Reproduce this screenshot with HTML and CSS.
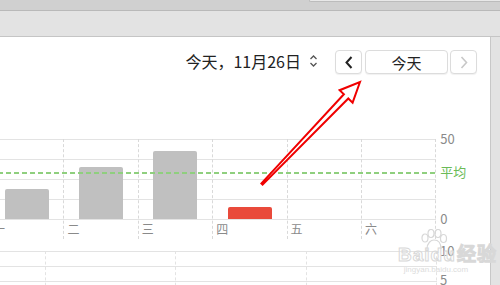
FILE: index.html
```html
<!DOCTYPE html>
<html lang="zh-CN">
<head>
    <meta charset="UTF-8">
    <title>日历 - 今天</title>
    <link rel="stylesheet" href="styles.css">
</head>
<body>
    <div class="titlebar">
        <div class="other-window"></div>
    </div>
    <div class="tabbar"></div>

    <div class="main">
        <div class="content">
            <!-- Date picker and navigation -->
            <div class="toolbar">
                <span class="date-label">今天，11月26日</span>
                <svg class="stepper" width="9" height="14" viewBox="0 0 9 14">
                    <path d="M1.5 5 L4.5 2 L7.5 5 M1.5 9 L4.5 12 L7.5 9" fill="none" stroke="#555" stroke-width="1.3"/>
                </svg>
                <div class="nav">
                    <button class="nav-btn arrow">
                        <svg width="8" height="13" viewBox="0 0 8 13"><path d="M6.5 1 L1.5 6.5 L6.5 12" fill="none" stroke="#222" stroke-width="2"/></svg>
                    </button>
                    <button class="nav-btn today">今天</button>
                    <button class="nav-btn arrow" disabled>
                        <svg width="8" height="13" viewBox="0 0 8 13"><path d="M1.5 1 L6.5 6.5 L1.5 12" fill="none" stroke="#c8c8c8" stroke-width="1.6"/></svg>
                    </button>
                </div>
            </div>

            <!-- Weekly bar chart -->
            <div class="chart">
                <div class="plot">
                    <div class="day"><div class="area"><div class="bar" style="height: 30px"></div></div><span class="day-name">一</span></div>
                    <div class="day"><div class="area"><div class="bar" style="height: 52px"></div></div><span class="day-name">二</span></div>
                    <div class="day"><div class="area"><div class="bar" style="height: 68px"></div></div><span class="day-name">三</span></div>
                    <div class="day"><div class="area"><div class="bar today-bar" style="height: 12px"></div></div><span class="day-name">四</span></div>
                    <div class="day"><div class="area"></div><span class="day-name">五</span></div>
                    <div class="day"><div class="area"></div><span class="day-name">六</span></div>
                    <div class="avg-line"></div>
                </div>
                <div class="axis">
                    <span class="tick top">50</span>
                    <span class="tick avg">平均</span>
                    <span class="tick zero">0</span>
                </div>
            </div>

            <!-- Second chart (cut off) -->
            <div class="chart2">
                <div class="plot2">
                    <div class="col"></div>
                    <div class="col"></div>
                    <div class="col"></div>
                    <div class="col"></div>
                </div>
                <div class="axis2">
                    <span>10</span>
                    <span>5</span>
                </div>
            </div>
        </div>
        <div class="side"></div>
    </div>

    <!-- Annotation arrow -->
    <svg class="annotation" width="500" height="285" viewBox="0 0 500 285">
        <polygon points="360,82 352.6,102.6 348.3,98.5 262.6,184.6 261.4,183.4 343.9,94.3 339.6,90.2"
                 fill="#fff" stroke="#f00000" stroke-width="2" stroke-linejoin="miter"/>
    </svg>

    <!-- Watermark -->
    <div class="watermark">
        <svg class="paw" width="30" height="22" viewBox="0 0 30 22">
            <g fill="none" stroke="#d8d8d8" stroke-width="1.2">
                <ellipse cx="7" cy="9" rx="3" ry="4"/>
                <ellipse cx="13" cy="4.5" rx="3" ry="4"/>
                <ellipse cx="20" cy="4.5" rx="3" ry="4"/>
                <ellipse cx="25.5" cy="9.5" rx="3" ry="4"/>
                <path d="M9 20 C9 14 13 11 16 11 C20 11 23 14 23 20"/>
            </g>
        </svg>
        <div class="wm-title">Bai<span class="wm-du">du</span>经验</div>
        <div class="wm-url">jingyan.baidu.com</div>
    </div>
</body>
</html>
```

FILE: styles.css
```css
/* Page base */
body {
    margin: 0;
    width: 500px;
    height: 285px;
    overflow: hidden;
    background: #fff;
    font-family: "Noto Sans CJK SC", "Noto Sans", sans-serif;
    position: relative;
}

/* Window chrome at the top */
.titlebar {
    height: 10px;
    background: #d0d0d0;
    border-bottom: 1px solid #b9b9b9;
    display: flex;
    justify-content: flex-end;
    align-items: flex-start;
}

.other-window {
    width: 190px;
    height: 1px;
    background: #e8e8e8;
    border-bottom: 1px solid #bcbcbc;
    border-left: 1px solid #bcbcbc;
    border-bottom-left-radius: 3px;
}

.tabbar {
    height: 25px;
    background: #e3e3e3;
    border-bottom: 1px solid #c5c5c5;
}

.main {
    display: flex;
    height: 248px;
}

.content {
    flex: 1;
    overflow: hidden;
}

.side {
    width: 9px;
    background: #e3e3e3;
    border-left: 1px solid #c8c8c8;
}

/* Toolbar with date and nav buttons */
.toolbar {
    display: flex;
    justify-content: flex-end;
    align-items: center;
    height: 24px;
    margin-top: 13px;
    padding-right: 13px;
}

.date-label {
    font-size: 16px;
    color: #222;
    margin-top: -2px;
}

.stepper {
    margin-left: 8px;
    margin-top: -2px;
}

.nav {
    display: flex;
    gap: 2px;
    margin-left: 17px;
}

.nav-btn {
    height: 24px;
    padding: 0;
    background: #fff;
    border: 1px solid #dcdcdc;
    border-radius: 4px;
    box-shadow: 0 1px 1px rgba(0, 0, 0, 0.06);
    display: flex;
    align-items: center;
    justify-content: center;
    font-family: inherit;
}

.arrow {
    width: 27px;
}

.today {
    width: 83px;
    font-size: 15px;
    color: #222;
    margin-left: 1px;
}

/* Weekly chart */
.chart {
    display: flex;
    margin-top: 65px;
    margin-left: -10px;
}

.plot {
    position: relative;
    display: grid;
    grid-template-columns: repeat(6, 74.4px);
    background: repeating-linear-gradient(to bottom, #e3e3e3 0 1px, transparent 1px 20px) top left / 100% 81px no-repeat;
}

.day {
    display: flex;
    flex-direction: column;
    border-right: 1px dashed #d9d9d9;
}

.area {
    height: 80px;
    display: flex;
    align-items: flex-end;
    justify-content: center;
}

.bar {
    width: 44px;
    background: #c0c0c0;
    border-radius: 2px 2px 0 0;
}

.today-bar {
    background: #e94a3b;
}

.day-name {
    height: 20px;
    padding-left: 3px;
    padding-top: 1px;
    box-sizing: border-box;
    font-size: 12px;
    line-height: 16px;
    color: #8a8a8a;
    border-top: 1px solid #e3e3e3;
}

.avg-line {
    position: absolute;
    left: 0;
    right: 0;
    top: 33px;
    height: 2px;
    background: repeating-linear-gradient(to right, #8fcf7e 0 5px, transparent 5px 8px);
}

.axis {
    position: relative;
    width: 50px;
    font-size: 13px;
    color: #8a8a8a;
}

.tick {
    position: absolute;
    left: 4px;
    line-height: 16px;
}

.tick.top {
    top: -8px;
}

.tick.avg {
    top: 25px;
    color: #6bbb57;
}

.tick.zero {
    top: 72px;
}

/* Second chart, mostly below the fold */
.chart2 {
    display: flex;
    margin-top: 12px;
}

.plot2 {
    display: grid;
    grid-template-columns: 46px 130px 131px 130px;
    height: 40px;
    background: repeating-linear-gradient(to bottom, #e3e3e3 0 1px, transparent 1px 15px);
}

.col {
    border-right: 1px dashed #e3e3e3;
}

.axis2 {
    display: flex;
    flex-direction: column;
    gap: 13px;
    padding-left: 3px;
    margin-top: -8px;
    font-size: 13px;
    line-height: 16px;
    color: #8a8a8a;
}

/* Red annotation arrow drawn over the page */
.annotation {
    position: absolute;
    left: 0;
    top: 0;
    pointer-events: none;
}

/* Baidu watermark */
.watermark {
    position: absolute;
    left: 398px;
    top: 229px;
    width: 76px;
    text-align: center;
    color: rgba(255, 255, 255, 0.3);
}

.paw {
    display: block;
    margin: 0 auto -6px 20px;
}

.wm-title {
    font-family: "Liberation Sans", sans-serif;
    font-size: 19px;
    font-weight: bold;
    line-height: 20px;
    -webkit-text-stroke: 1px #d8d8d8;
    letter-spacing: 1px;
    white-space: nowrap;
}

.wm-du {
    margin-right: 1px;
}

.wm-url {
    font-family: "Liberation Sans", sans-serif;
    font-size: 8px;
    color: #dcdcdc;
    line-height: 10px;
}
```
